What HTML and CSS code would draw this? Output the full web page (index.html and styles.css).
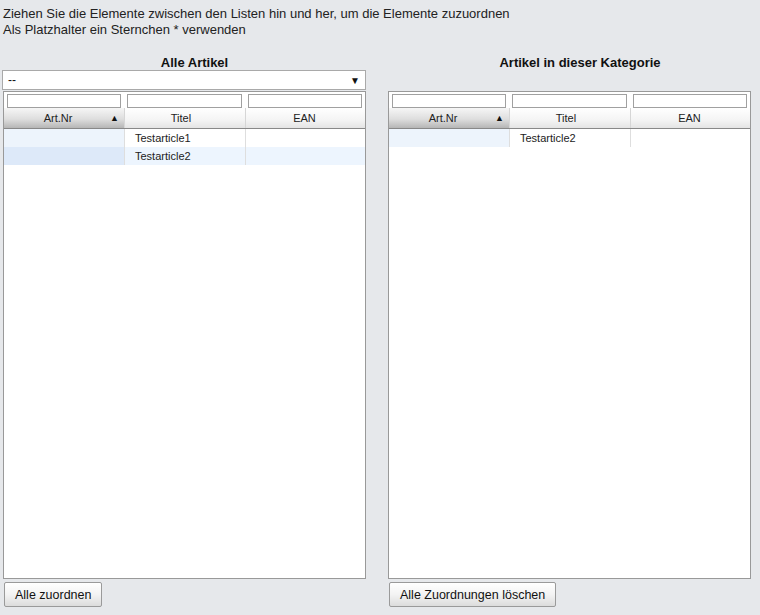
FILE: index.html
```html
<!DOCTYPE html>
<html>
<head>
<meta charset="utf-8">
<link rel="stylesheet" href="styles.css">
</head>
<body>
<div class="intro">
  <div>Ziehen Sie die Elemente zwischen den Listen hin und her, um die Elemente zuzuordnen</div>
  <div>Als Platzhalter ein Sternchen * verwenden</div>
</div>
<div class="columns">
  <div class="col col-left">
    <div class="title title-left">Alle Artikel</div>
    <div class="select"><span>--</span><span class="caret">▼</span></div>
    <div class="grid">
      <div class="filters">
        <div class="fcell"><div class="finput"></div></div>
        <div class="fcell"><div class="finput"></div></div>
        <div class="fcell"><div class="finput"></div></div>
      </div>
      <div class="header">
        <div class="hcell sorted">Art.Nr<span class="sort">▲</span></div>
        <div class="hcell h2">Titel</div>
        <div class="hcell h3">EAN</div>
      </div>
      <div class="row">
        <div class="cell c1"></div>
        <div class="cell c2">Testarticle1</div>
        <div class="cell c3"></div>
      </div>
      <div class="row alt">
        <div class="cell c1"></div>
        <div class="cell c2">Testarticle2</div>
        <div class="cell c3"></div>
      </div>
    </div>
    <div class="actions"><button class="btn">Alle zuordnen</button></div>
  </div>
  <div class="col col-right">
    <div class="title title-right">Artikel in dieser Kategorie</div>
    <div class="select-space"></div>
    <div class="grid">
      <div class="filters">
        <div class="fcell"><div class="finput"></div></div>
        <div class="fcell"><div class="finput"></div></div>
        <div class="fcell"><div class="finput"></div></div>
      </div>
      <div class="header">
        <div class="hcell sorted">Art.Nr<span class="sort">▲</span></div>
        <div class="hcell h2">Titel</div>
        <div class="hcell h3">EAN</div>
      </div>
      <div class="row">
        <div class="cell c1"></div>
        <div class="cell c2">Testarticle2</div>
        <div class="cell c3"></div>
      </div>
    </div>
    <div class="actions"><button class="btn">Alle Zuordnungen löschen</button></div>
  </div>
</div>
</body>
</html>
```

FILE: styles.css
```css
html, body {
  margin: 0;
  padding: 0;
}
* {
  box-sizing: border-box;
}
body {
  background: #e6e8eb;
  font-family: "Liberation Sans", Arial, sans-serif;
  font-size: 13px;
  color: #222;
  width: 760px;
  height: 615px;
  overflow: hidden;
}
.intro {
  padding: 6px 0 0 3px;
  line-height: 16px;
}
.columns {
  display: flex;
  margin-top: 17px;
}
.col {
  display: flex;
  flex-direction: column;
  width: 364px;
}
.col-left {
  margin-left: 2px;
}
.col-right {
  margin-left: 22px;
}
.title {
  font-weight: bold;
  font-size: 13px;
  line-height: 15px;
  height: 15px;
  text-align: center;
  color: #111;
}
.title-left {
  padding-left: 21px;
}
.title-right {
  padding-left: 20px;
}
.select {
  height: 20px;
  border: 1px solid #a9a9a9;
  background: #fff;
  display: flex;
  justify-content: space-between;
  align-items: center;
  padding: 0 5px 0 5px;
  font-size: 12px;
  color: #111;
}
.caret {
  font-size: 10px;
}
.select-space {
  height: 20px;
}
.grid {
  margin: 1px 0 0 1px;
  width: 363px;
  height: 488px;
  border: 1px solid #999;
  background: #fff;
}
.col-right .grid {
  margin-left: 0;
}
.filters,
.header,
.row {
  display: grid;
  grid-template-columns: 120px 121px 120px;
}
.filters {
  height: 16px;
  padding-top: 2px;
}
.fcell {
  padding: 0 3px;
}
.finput {
  height: 14px;
  border: 1px solid #a0a0a0;
  background: #fff;
}
.header {
  height: 21px;
  border-bottom: 1px solid #888;
}
.hcell {
  position: relative;
  text-align: center;
  font-size: 11px;
  line-height: 19px;
  padding-top: 1px;
  color: #222;
  background: linear-gradient(#ffffff, #f4f4f4 60%, #e4e4e4);
  border-left: 1px solid #d6d6d6;
}
.hcell.sorted {
  border-left: 0;
  padding-right: 12px;
  background: linear-gradient(#f6f6f6, #dedede 55%, #b6b6b6);
}
.hcell.h2 {
  padding-right: 8px;
}
.hcell.h3 {
  padding-right: 2px;
}
.sort {
  position: absolute;
  right: 5px;
  top: 1px;
  font-size: 9px;
  color: #111;
}
.row {
  height: 18px;
}
.cell {
  font-size: 11px;
  line-height: 18px;
  color: #222;
  padding-left: 10px;
  border-left: 1px solid #dedede;
}
.cell.c1 {
  border-left: 0;
  background: #edf4fc;
}
.row.alt {
  background: #edf5fe;
}
.row.alt .c1 {
  background: #dde9f9;
}
.actions {
  padding-top: 3px;
}
.btn {
  height: 25px;
  margin-left: 2px;
  padding: 0 10px;
  border: 1px solid #9a9a9a;
  border-radius: 2px;
  background: linear-gradient(#ffffff, #f3f3f3 50%, #dcdcdc);
  font-family: "Liberation Sans", Arial, sans-serif;
  font-size: 12.5px;
  color: #111;
}
.col-right .btn {
  margin-left: 1px;
}
```
